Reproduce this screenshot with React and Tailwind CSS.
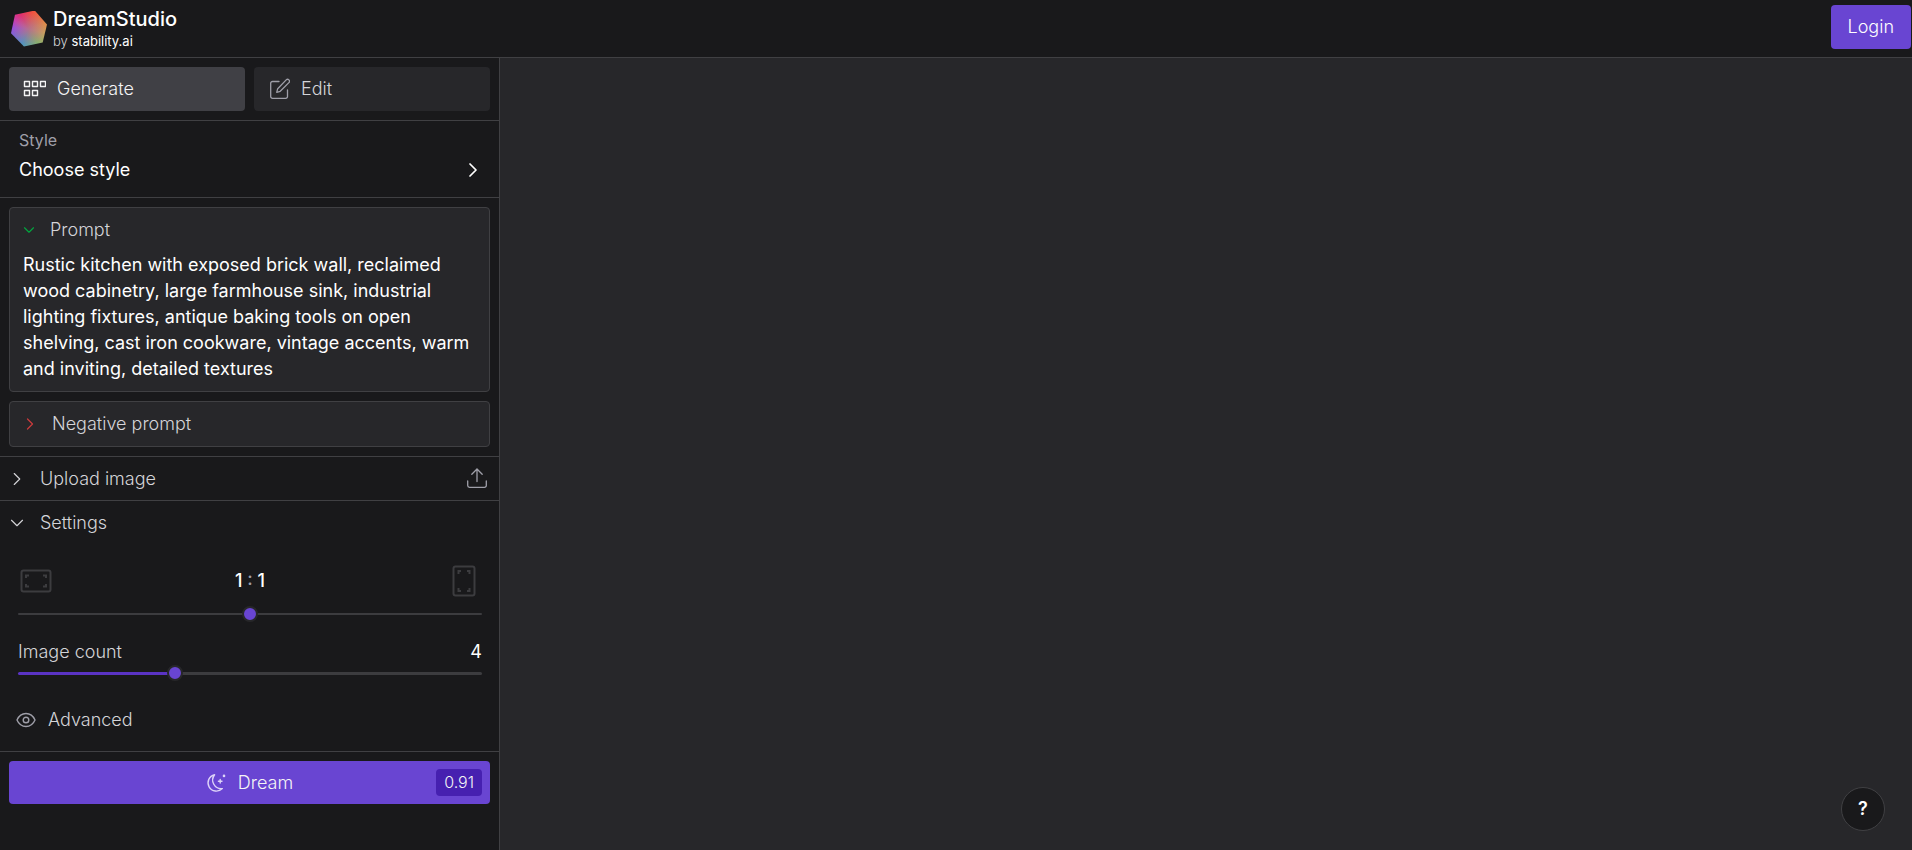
import { useState } from 'react'
import { ChevronDown, ChevronRight } from 'lucide-react'

function Logo() {
  return (
    <span
      aria-hidden="true"
      className="block size-9 shrink-0 bg-[radial-gradient(circle,#b5718c,transparent_65%),conic-gradient(from_10deg,#f0503f,#dd8a4c_60deg,#c9a05e_95deg,#85b070_140deg,#4f93c0_195deg,#7d68d0_235deg,#9a4fdc_265deg,#c63fae_290deg,#e02d6e_320deg,#f0503f)] [clip-path:polygon(11%_12%,66%_0,100%_39%,88%_89%,36%_100%,0_63%)]"
    />
  )
}

function GridIcon() {
  return (
    <svg width="23" height="18" viewBox="0 0 23 18" fill="none" stroke="currentColor" strokeWidth="1.4" strokeLinejoin="round" aria-hidden="true">
      <rect x="1.5" y="1.500" width="5" height="5" />
      <rect x="9.500" y="1.500" width="5" height="5" />
      <rect x="17.500" y="1.500" width="5" height="5" />
      <rect x="1.500" y="10.500" width="5" height="5" />
      <rect x="9.500" y="10.500" width="5" height="5" />
    </svg>
  )
}

function EditIcon() {
  return (
    <svg width="22" height="22" viewBox="0 0 22 22" fill="none" stroke="currentColor" strokeWidth="1.3" strokeLinecap="round" strokeLinejoin="round" className="text-zinc-400" aria-hidden="true">
      <path d="M11 3.5H4.500A1.800 1.800 0 0 0 2.700 5.300V18.500A1.800 1.800 0 0 0 4.500 20.300H17.700A1.800 1.800 0 0 0 19.500 18.500V12" />
      <path d="M18.200 1.900a1.900 1.900 0 0 1 2.700 2.700L12.200 13.300L8.700 14.300L9.700 10.700Z" />
    </svg>
  )
}

function UploadIcon() {
  return (
    <svg width="22" height="22" viewBox="0 0 22 22" fill="none" stroke="currentColor" strokeWidth="1.3" strokeLinecap="round" strokeLinejoin="round" className="text-zinc-400" aria-hidden="true">
      <path d="M1.700 13V17.500A1.800 1.800 0 0 0 3.500 19.300H18.500A1.800 1.800 0 0 0 20.300 17.500V13" />
      <path d="M11 13.500V1M5.800 6.300L11 1L16.200 6.300" />
    </svg>
  )
}

function EyeIcon() {
  return (
    <svg width="20" height="16" viewBox="0 0 20 16" fill="none" stroke="currentColor" strokeWidth="1.400" className="text-zinc-400" aria-hidden="true">
      <path d="M1 8C3 3.500 6.200 1.500 10 1.500S17 3.500 19 8C17 12.500 13.800 14.500 10 14.500S3 12.500 1 8Z" strokeLinejoin="round" />
      <circle cx="10" cy="8" r="2.800" />
    </svg>
  )
}

function MoonIcon() {
  return (
    <svg width="20" height="20" viewBox="0 0 20 20" fill="none" stroke="currentColor" strokeWidth="1.400" strokeLinecap="round" strokeLinejoin="round" className="text-[#ddd3f8]" aria-hidden="true">
      <path d="M8.600 1.700A8.300 8.300 0 1 0 16.300 15.600A8.600 8.600 0 0 1 8.600 1.700Z" />
      <path d="M14.200 6.500V10.100M12.400 8.300H16" />
      <circle cx="18" cy="2.900" r="1.300" fill="currentColor" stroke="none" />
    </svg>
  )
}

function AspectIcon({ tall }) {
  return (
    <svg width="32" height="32" viewBox="0 0 32 32" fill="none" stroke="currentColor" strokeWidth="2" aria-hidden="true">
      <g transform={tall ? 'rotate(90 16 16)' : undefined}>
        <rect x="1.500" y="5.500" width="29" height="21" rx="2" />
        <path d="M6 13V10.500H9M23 10.500H26V13M26 19V21.500H23M9 21.500H6V19" />
      </g>
    </svg>
  )
}

function Slider({ id, label, min, max, value, onChange, track, fill }) {
  const pct = ((value - min) / (max - min)) * 100
  return (
    <input
      id={id}
      type="range"
      aria-label={label}
      min={min}
      max={max}
      value={value}
      onChange={(e) => onChange(Number(e.target.value))}
      style={{ '--fill': fill ? `${pct + 2}%` : '0%' }}
      className={`block h-4 w-full cursor-pointer appearance-none bg-transparent [&::-webkit-slider-runnable-track]:rounded-full [&::-webkit-slider-runnable-track]:bg-[linear-gradient(to_right,#5a33c4_var(--fill),#3c3c3f_var(--fill))] [&::-webkit-slider-thumb]:size-4 [&::-webkit-slider-thumb]:appearance-none [&::-webkit-slider-thumb]:rounded-full [&::-webkit-slider-thumb]:border-2 [&::-webkit-slider-thumb]:border-zinc-800 [&::-webkit-slider-thumb]:bg-[#6945d2] ${track}`}
    />
  )
}

export default function App() {
  const [tab, setTab] = useState('generate')
  const [prompt, setPrompt] = useState(
    'Rustic kitchen with exposed brick wall, reclaimed wood cabinetry, large farmhouse sink, industrial lighting fixtures, antique baking tools on open shelving, cast iron cookware, vintage accents, warm and inviting, detailed textures'
  )
  const [ratio, setRatio] = useState(0)
  const [count, setCount] = useState(4)

  const tabClass = (name) =>
    `flex h-11 flex-1 items-center gap-[11px] rounded px-3.5 ${
      tab === name ? 'bg-[#404045] text-zinc-100' : 'bg-zinc-800 text-zinc-300'
    }`

  return (
    <div className="flex min-h-screen flex-col bg-zinc-800 font-['Inter',sans-serif] text-lg font-light text-zinc-300">
      {/* Header */}
      <header className="flex items-center justify-between border-b border-[#404043] bg-[#19191b] pr-px">
        <a href="#" className="flex h-[57px] items-center gap-1.5 pl-[11px]">
          <Logo />
          <span className="flex flex-col">
            <span className="text-xl leading-6 font-medium text-white">DreamStudio</span>
            <span className="text-[13px] leading-5 text-zinc-300">
              by <span className="font-normal text-white">stability.ai</span>
            </span>
          </span>
        </a>
        <button className="mb-1 h-11 rounded bg-[#6945d2] px-[17px] text-white">Login</button>
      </header>

      <div className="flex flex-1">
        {/* Sidebar */}
        <aside className="w-[500px] shrink-0 border-r border-[#404043] bg-[#19191b]">
          <div className="flex gap-[9px] border-b border-[#404043] p-[9px]">
            <button onClick={() => setTab('generate')} className={tabClass('generate')}>
              <GridIcon />
              Generate
            </button>
            <button onClick={() => setTab('edit')} className={tabClass('edit')}>
              <EditIcon />
              Edit
            </button>
          </div>

          <button className="flex h-[77px] w-full items-end justify-between border-b border-[#404043] pr-3.5 pb-[13px] pl-[19px] text-left">
            <span className="flex flex-col gap-1">
              <span className="text-base leading-6 font-normal text-zinc-400">Style</span>
              <span className="leading-7 font-normal text-white">Choose style</span>
            </span>
            <ChevronRight size={24} strokeWidth={1.75} className="mb-0.5 text-white" />
          </button>

          {/* Prompts */}
          <div className="flex flex-col gap-[9px] border-b border-[#404043] p-[9px]">
            <section className="rounded border border-[#404043] bg-zinc-800">
              <button className="flex h-11 w-full items-center gap-3 px-2.5">
                <ChevronDown size={18} strokeWidth={1.5} className="text-green-600" />
                <label htmlFor="prompt">Prompt</label>
              </button>
              <textarea
                id="prompt"
                rows={5}
                value={prompt}
                onChange={(e) => setPrompt(e.target.value)}
                className="block w-full resize-none overflow-hidden px-[13px] pb-[9px] leading-[26px] font-normal text-white outline-none"
              />
            </section>
            <button className="flex h-[46px] items-center gap-3 rounded border border-[#404043] bg-zinc-800 px-2.5">
              <ChevronRight size={20} strokeWidth={1.5} className="text-[#c93a3c]" />
              Negative prompt
            </button>
          </div>

          <button className="flex h-11 w-full items-center gap-3 border-b border-[#404043] pr-[11px] pl-1.5">
            <ChevronRight size={22} strokeWidth={1.25} />
            Upload image
            <span className="ml-auto">
              <UploadIcon />
            </span>
          </button>

          {/* Settings */}
          <section className="border-b border-[#404043]">
            <button className="flex h-11 w-full items-center gap-3 px-1.5">
              <ChevronDown size={22} strokeWidth={1.25} />
              Settings
            </button>
            <div className="pt-5 pr-[17px] pl-[18px]">
              <div className="flex items-center justify-between px-0.5 text-[#3c3c3f]">
                <AspectIcon />
                <span className="font-medium text-zinc-400">
                  <span className="text-white">1</span> : <span className="text-white">1</span>
                </span>
                <AspectIcon tall />
              </div>
              <div className="pt-[9px]">
                <Slider
                  label="Aspect ratio"
                  min={-5}
                  max={5}
                  value={ratio}
                  onChange={setRatio}
                  track="[&::-webkit-slider-runnable-track]:h-0.5 [&::-webkit-slider-thumb]:-mt-[7px]"
                />
              </div>
              <div className="flex items-center justify-between pt-4 leading-[27px]">
                <label htmlFor="count">Image count</label>
                <output htmlFor="count" className="font-normal text-white">{count}</output>
              </div>
              <Slider
                id="count"
                label="Image count"
                min={1}
                max={10}
                value={count}
                onChange={setCount}
                fill
                track="[&::-webkit-slider-runnable-track]:h-[3px] [&::-webkit-slider-thumb]:-mt-[7px]"
              />
            </div>
            <button className="mt-[17px] mb-[9px] flex h-11 items-center gap-3 px-4">
              <EyeIcon />
              Advanced
            </button>
          </section>

          <div className="p-[9px]">
            <button className="grid h-[43px] w-full grid-cols-[1fr_auto_1fr] items-center rounded bg-[#6945d2] px-2 text-zinc-100">
              <span className="col-start-2 flex items-center gap-3">
                <MoonIcon />
                Dream
              </span>
              <span className="justify-self-end rounded bg-[#4620b0] px-2 text-base leading-[27px]">0.91</span>
            </button>
          </div>
        </aside>

        {/* Canvas */}
        <main className="flex flex-1 items-end justify-end pr-[27px] pb-[19px]">
          <button aria-label="Help" className="size-11 rounded-full border border-[#404043] bg-[#19191b] font-semibold text-white">
            ?
          </button>
        </main>
      </div>
    </div>
  )
}
